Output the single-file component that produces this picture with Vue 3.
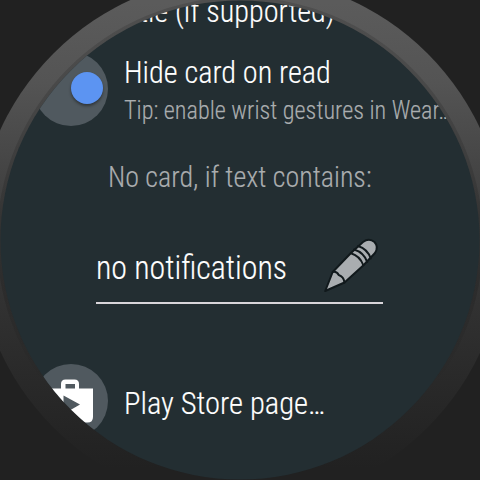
<script setup>
const stripes = ['M29 17.200Q38 20 41.200 29', 'M32 13.500Q42 16.500 45.200 26', 'M36 10Q45.500 13 48.800 22.500']
</script>

<template>
  <main class="watch">
    <div class="bezel"></div>
    <div class="rim"></div>
    <div class="face">
      <div class="row clipped"><span class="label">title (if supported)</span></div>
      <div class="row toggle">
        <div class="disc"><i class="knob"></i></div>
        <div class="texts">
          <span class="label">Hide card on read</span>
          <span class="tip">Tip: enable wrist gestures in Wear…</span>
        </div>
      </div>
      <div class="heading"><span>No card, if text contains:</span></div>
      <div class="field">
        <span class="label value">no notifications</span>
        <svg class="pencil" viewBox="0 0 60 60">
          <g fill="#a9adb0" stroke="#11191c" stroke-width="2" stroke-linejoin="round" stroke-linecap="round">
            <path d="M3.200 55L10.700 36L28.700 17.200L41 6Q47 1.500 52.500 6Q57 11 53 17L41.500 29.200L22.500 46.500Z" />
            <path d="M10.700 36q4-1 6 3q5 1.500 5.800 7.500" fill="none" />
            <path v-for="s in stripes" :key="s" :d="s" fill="none" />
          </g>
        </svg>
      </div>
      <div class="row store">
        <div class="disc">
          <svg class="bag" viewBox="0 0 74 74">
            <path fill="#fff" fill-rule="evenodd" d="M14 24.500H27V20Q27 15.500 31.500 15.500H40.500Q45 15.500 45 20V24.500H59V53Q59 58.500 53.500 58.500H19.500Q14 58.500 14 53ZM31.500 24.500H41V20H31.500ZM29.500 31.500V50L46 40.500Z" />
          </svg>
        </div>
        <span class="label page">Play Store page…</span>
      </div>
    </div>
  </main>
</template>

<style>
body { margin: 0; background: #212121; }
</style>

<style scoped>
.watch { position: relative; width: 480px; height: 480px; overflow: hidden; background: #212121; font-family: "Roboto Condensed", Roboto, sans-serif; font-weight: 300; font-stretch: 75%; -webkit-text-stroke: .15px; }
.bezel { position: absolute; left: -24.5px; top: -24.5px; width: 529px; height: 529px; border-radius: 50%; background: linear-gradient(#5b5b5b 5%, #545454 20%, #383838 50%, #2a2a2a 75%, #212121 93%); }
.rim { position: absolute; left: -3px; top: -3px; width: 486px; height: 486px; border-radius: 50%; background: linear-gradient(#0002, #0002 60%, #0000 80%); }
.face { position: relative; width: 480px; height: 480px; background: #232e32; clip-path: circle(239.5px at 240px 240px); color: #fff; }
.row { display: flex; }
.label { display: block; white-space: nowrap; font-size: 31px; line-height: 36px; transform: scaleX(.976); transform-origin: 0 50%; }
.clipped { height: 51px; padding-left: 124px; align-items: flex-start; }
.clipped .label { margin-top: -6px; }
.toggle { height: 75px; padding-left: 34px; }
.disc { flex: none; position: relative; width: 74px; height: 74px; margin-top: 1px; border-radius: 50%; background: #50595f; }
.knob { position: absolute; left: 37px; top: 20px; width: 32px; height: 32px; border-radius: 50%; background: #5c94f2; box-shadow: 0 2px 3px #0006; }
.texts { margin: 4px 0 0 16px; }
.tip { display: block; margin-top: 5px; white-space: nowrap; font-size: 25px; line-height: 30px; color: #aaadaf; transform: scaleX(.967); transform-origin: 0 50%; }
.heading { box-sizing: border-box; padding: 34px 0 0 108px; height: 100px; font-size: 29px; line-height: 34px; color: #aaadaf; white-space: nowrap; }
.heading span { display: inline-block; transform: scaleX(.965); transform-origin: 0 50%; }
.field { display: flex; align-items: flex-start; justify-content: space-between; width: 287px; height: 68px; margin: 10px 0 0 96px; border-bottom: 2px solid #d9d6da; box-sizing: border-box; }
.value { margin-top: 14px; font-size: 33px; transform: scaleX(.966); }
.pencil { flex: none; width: 60px; height: 60px; margin-right: 1px; }
.store { margin-top: 59px; height: 75px; padding-left: 34px; }
.page { margin: 23px 0 0 16px; transform: scaleX(.985); }
.bag { display: block; width: 74px; height: 74px; }
</style>
